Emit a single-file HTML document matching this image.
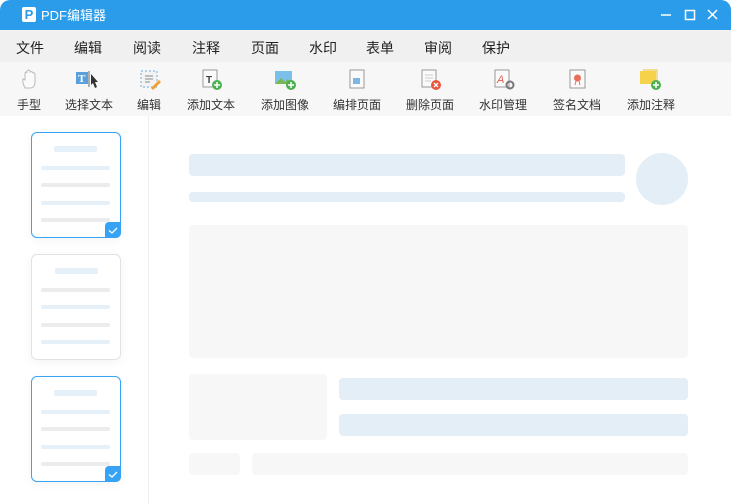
<!DOCTYPE html>
<html><head><meta charset="utf-8"><style>
*{margin:0;padding:0;box-sizing:border-box}
body{width:731px;height:504px;background:#fff;font-family:"Liberation Sans","Noto Sans CJK SC",sans-serif;position:relative;overflow:hidden;color:#333}
.a{position:absolute}
#title{left:0;top:0;width:731px;height:30px;background:#2b9cea;border-radius:10px 10px 0 0}
#menu{left:0;top:30px;width:731px;height:32px;background:#f0f0f0}
#tool{left:0;top:62px;width:731px;height:54px;background:#f7f7f7}
.m{top:38px;font-size:14px;color:#222}
.t{top:96px;font-size:12px;color:#333;width:80px;text-align:center}
.card{width:90px;height:106px;border-radius:6px;background:#fff;box-shadow:0 2px 10px rgba(0,0,0,.05)}
.sel{border:1.5px solid #36a3f5}
.uns{border:1.5px solid #e2e2e2}
.ln{position:absolute;left:9px;width:69px;height:4px;border-radius:2px}
.b{background:#e6f0f9}.g{background:#ececec}
.chk{position:absolute;right:-1px;bottom:-1px;width:16px;height:16px;background:#36a3f5;border-radius:4px 0 5px 0}
.ic{top:68px;width:22px;height:22px}
</style></head><body>
<div id="title" class="a"></div>
<div class="a" style="left:22px;top:7px;width:14px;height:15px;background:#fff;border-radius:2px;color:#2b9cea;font-weight:bold;font-size:13px;line-height:15px;text-align:center">P</div>
<div class="a" style="left:41px;top:5px;color:#fff;font-size:13px">PDF编辑器</div>
<svg class="a" style="left:660px;top:8px" width="62" height="14"><path d="M1 7h10" stroke="#fff" stroke-width="1.5"/><rect x="25.5" y="2.5" width="9" height="9" fill="none" stroke="#fff" stroke-width="1.5"/><path d="M48 2l9 9M57 2l-9 9" stroke="#fff" stroke-width="1.5"/></svg>
<div id="menu" class="a"></div>
<div class="a m" style="left:16px">文件</div><div class="a m" style="left:74px">编辑</div><div class="a m" style="left:133px">阅读</div><div class="a m" style="left:192px">注释</div><div class="a m" style="left:251px">页面</div><div class="a m" style="left:309px">水印</div><div class="a m" style="left:366px">表单</div><div class="a m" style="left:424px">审阅</div><div class="a m" style="left:482px">保护</div>
<div id="tool" class="a"></div>
<svg class="a ic" style="left:19px"><path d="M6 20 Q3 14 4 11 L6 12 V5 Q7 3 8 5 V3 Q10 1 11 3 V4 Q13 3 14 5 Q16 4 16 7 V15 Q15 20 12 20Z" fill="#fafafa" stroke="#bbb"/></svg>
<svg class="a ic" style="left:76px"><rect x="0" y="4" width="12" height="12" fill="#5aa0da"/><text x="2" y="14" font-size="11" font-weight="bold" fill="#fff" font-family="Liberation Serif">T</text><path d="M13 3v16" stroke="#666"/><path d="M15 6l7 8h-3l2 5-2 1-2-5-2 2z" fill="#333"/></svg>
<svg class="a ic" style="left:139px"><rect x="2" y="3" width="16" height="16" fill="#f3f3f3" stroke="#6aa9e0" stroke-dasharray="2 2"/><path d="M6 8h8M6 11h8M6 14h5" stroke="#888"/><path d="M12 20l8-8 2 2-8 8z" fill="#f0a030"/></svg>
<svg class="a ic" style="left:201px"><rect x="2" y="2" width="14" height="17" fill="#fafafa" stroke="#999"/><text x="5" y="15" font-size="10" font-weight="bold" fill="#444">T</text><circle cx="16" cy="17" r="5" fill="#4cb050"/><path d="M13 17h6M16 14v6" stroke="#fff" stroke-width="1.5"/></svg>
<svg class="a ic" style="left:274px"><rect x="1" y="3" width="17" height="13" fill="#7bc0ea"/><path d="M1 16l6-6 4 4 3-3 4 5z" fill="#78b850"/><circle cx="17" cy="17" r="5" fill="#4cb050"/><path d="M14 17h6M17 14v6" stroke="#fff" stroke-width="1.5"/></svg>
<svg class="a ic" style="left:347px"><rect x="3" y="2" width="14" height="18" fill="#fafafa" stroke="#999"/><rect x="6" y="10" width="7" height="6" fill="#7bb6e6"/></svg>
<svg class="a ic" style="left:420px"><rect x="2" y="2" width="14" height="17" fill="#fafafa" stroke="#999"/><path d="M5 7h8M5 10h8M5 13h6" stroke="#ccc"/><circle cx="16" cy="17" r="5" fill="#e8553e"/><path d="M14 15l4 4M18 15l-4 4" stroke="#fff" stroke-width="1.3"/></svg>
<svg class="a ic" style="left:493px"><rect x="2" y="2" width="14" height="17" fill="#fafafa" stroke="#999"/><text x="4" y="15" font-size="11" fill="#e06050" font-style="italic">A</text><circle cx="17" cy="17" r="3.5" fill="none" stroke="#777" stroke-width="2"/></svg>
<svg class="a ic" style="left:567px"><rect x="3" y="2" width="15" height="18" fill="#fafafa" stroke="#999"/><circle cx="10.5" cy="10" r="3.5" fill="#e8705a"/><path d="M9 13l-1 4M12 13l1 4" stroke="#e8705a"/></svg>
<svg class="a ic" style="left:640px"><rect x="0" y="3" width="16" height="13" fill="#f5d24a"/><path d="M3 2h14v12" fill="none" stroke="#f0c030"/><circle cx="16" cy="17" r="5" fill="#4cb050"/><path d="M13 17h6M16 14v6" stroke="#fff" stroke-width="1.5"/></svg>
<div class="a t" style="left:-11px">手型</div><div class="a t" style="left:49px">选择文本</div><div class="a t" style="left:109px">编辑</div><div class="a t" style="left:171px">添加文本</div><div class="a t" style="left:245px">添加图像</div><div class="a t" style="left:317px">编排页面</div><div class="a t" style="left:390px">删除页面</div><div class="a t" style="left:463px">水印管理</div><div class="a t" style="left:537px">签名文档</div><div class="a t" style="left:611px">添加注释</div>
<div class="a" style="left:148px;top:116px;width:1px;height:388px;background:#eee"></div>
<div class="a card sel" style="left:31px;top:132px"><div class="ln b" style="left:22px;width:43px;top:13px;height:6px"></div><div class="ln b" style="top:33px"></div><div class="ln g" style="top:50px"></div><div class="ln b" style="top:68px"></div><div class="ln g" style="top:85px"></div><div class="chk"><svg width="16" height="16"><path d="M4 8.5l3 2.5 5-5" fill="none" stroke="#fff" stroke-width="1.3"/></svg></div></div>
<div class="a card uns" style="left:31px;top:254px"><div class="ln b" style="left:23px;width:43px;top:13px;height:6px"></div><div class="ln g" style="top:33px"></div><div class="ln b" style="top:50px"></div><div class="ln g" style="top:68px"></div><div class="ln b" style="top:85px"></div></div>
<div class="a card sel" style="left:31px;top:376px"><div class="ln b" style="left:22px;width:43px;top:13px;height:6px"></div><div class="ln b" style="top:33px"></div><div class="ln g" style="top:50px"></div><div class="ln b" style="top:68px"></div><div class="ln g" style="top:85px"></div><div class="chk"><svg width="16" height="16"><path d="M4 8.5l3 2.5 5-5" fill="none" stroke="#fff" stroke-width="1.3"/></svg></div></div>
<div class="a" style="left:189px;top:154px;width:436px;height:22px;background:#e3eef7;border-radius:4px"></div>
<div class="a" style="left:636px;top:153px;width:52px;height:52px;background:#e3eef7;border-radius:50%"></div>
<div class="a" style="left:189px;top:192px;width:436px;height:10px;background:#e3eef7;border-radius:4px"></div>
<div class="a" style="left:189px;top:225px;width:499px;height:133px;background:#f7f7f7;border-radius:4px"></div>
<div class="a" style="left:189px;top:374px;width:138px;height:66px;background:#f7f7f7;border-radius:4px"></div>
<div class="a" style="left:339px;top:378px;width:349px;height:22px;background:#e3eef7;border-radius:4px"></div>
<div class="a" style="left:339px;top:414px;width:349px;height:22px;background:#e3eef7;border-radius:4px"></div>
<div class="a" style="left:189px;top:453px;width:51px;height:22px;background:#f7f7f7;border-radius:4px"></div>
<div class="a" style="left:252px;top:453px;width:436px;height:22px;background:#f7f7f7;border-radius:4px"></div>
</body></html>
